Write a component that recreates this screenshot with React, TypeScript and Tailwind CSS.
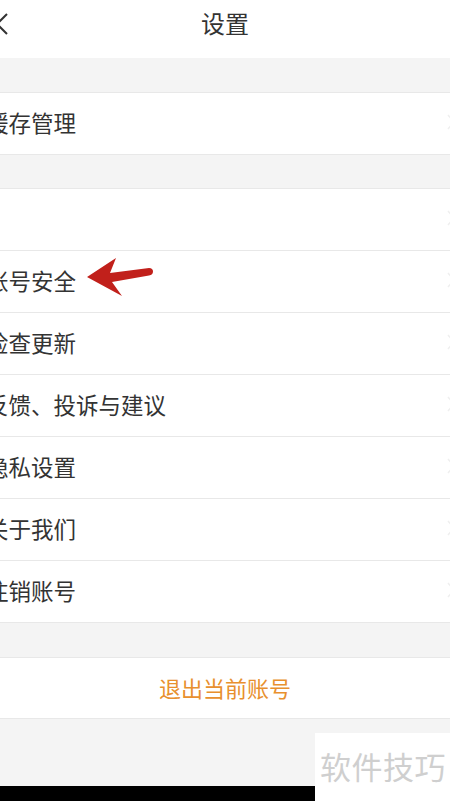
const GROUP = ["", "账号安全", "检查更新", "反馈、投诉与建议", "隐私设置", "关于我们", "注销账号"];

const font = { fontFamily: '"Noto Sans CJK SC", "Noto Sans", sans-serif' };

function Row({ label }: { label: string }) {
  return (
    <div className="flex h-[62px] items-center justify-between border-b border-[#e8e8e8] bg-white pb-[3px]">
      <span className="-ml-[14px] text-[22.5px] leading-none text-[#333]">{label}</span>
      <svg width="8" height="16" viewBox="0 0 8 16" className="-mr-[5px] text-[#efefef]">
        <path d="M1 1 L7 8 L1 15" fill="none" stroke="currentColor" strokeWidth="1.5" />
      </svg>
    </div>
  );
}

export default function App() {
  return (
    <div className="relative flex h-[801px] w-[450px] flex-col overflow-hidden bg-[#f4f4f4]" style={font}>
      {/* Header */}
      <div className="relative flex h-[58px] shrink-0 items-center justify-center bg-white pb-[12px]">
        <svg width="14" height="22" viewBox="0 0 14 22" className="absolute -left-[5px] top-[13px] text-[#333]">
          <path d="M12 1 L2 11 L12 21" fill="none" stroke="currentColor" strokeWidth="2" />
        </svg>
        <span className="text-[24px] leading-none text-[#333]">设置</span>
      </div>

      <div className="h-[34px] shrink-0" />

      <div className="shrink-0 border-t border-[#e8e8e8]">
        <Row label="缓存管理" />
      </div>

      <div className="h-[33px] shrink-0" />

      <div className="relative shrink-0 border-t border-[#e8e8e8]">
        {GROUP.map((label, i) => (
          <Row key={i} label={label} />
        ))}
        {/* red annotation arrow */}
        <svg
          width="70"
          height="42"
          viewBox="0 0 70 42"
          className="absolute left-[85px] top-[67px]"
        >
          <path
            d="M2 21 L31 2 L25 17 L64 12 Q68 12 68 15.5 Q68 19 64 19.5 L27 26 L37 40 Z"
            fill="#c1201b"
          />
        </svg>
      </div>

      <div className="h-[34px] shrink-0" />

      <div className="flex h-[62px] shrink-0 items-center justify-center border-y border-[#e8e8e8] bg-white pb-[3px]">
        <span className="text-[22px] leading-none text-[#e8902e]">退出当前账号</span>
      </div>

      <div className="flex-1" />
      <div className="h-[15px] shrink-0 bg-black" />

      {/* watermark */}
      <div className="absolute bottom-0 right-0 flex h-[68px] w-[135px] items-start bg-white pl-[5px] pt-[17px]">
        <span className="text-[31px] leading-none tracking-[0.5px] text-[#cfcfcf]">软件技巧</span>
      </div>
    </div>
  );
}
